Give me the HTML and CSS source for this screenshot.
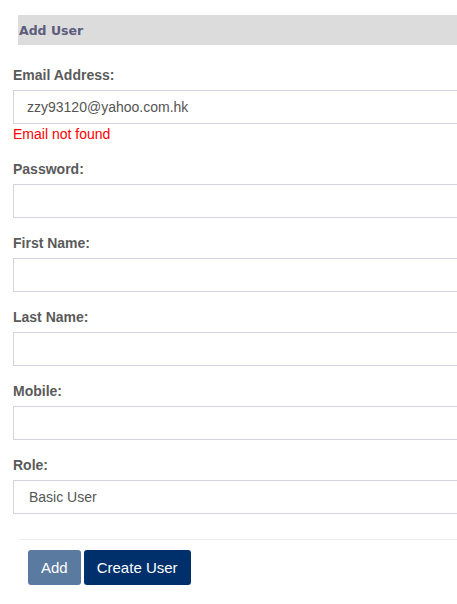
FILE: index.html
```html
<!DOCTYPE html>
<html>
<head>
<meta charset="utf-8">
<link rel="stylesheet" href="styles.css">
</head>
<body>
<div class="page">
  <div class="panel-title">Add User</div>
  <form class="form">
    <div class="field">
      <label class="label">Email Address:</label>
      <input class="input" type="text" value="zzy93120@yahoo.com.hk">
      <div class="error">Email not found</div>
    </div>
    <div class="field">
      <label class="label">Password:</label>
      <input class="input" type="password">
    </div>
    <div class="field">
      <label class="label">First Name:</label>
      <input class="input" type="text">
    </div>
    <div class="field">
      <label class="label">Last Name:</label>
      <input class="input" type="text">
    </div>
    <div class="field">
      <label class="label">Mobile:</label>
      <input class="input" type="text">
    </div>
    <div class="field">
      <label class="label">Role:</label>
      <select class="input select">
        <option>Basic User</option>
      </select>
    </div>
    <div class="actions">
      <button type="button" class="btn btn-light">Add</button>
      <button type="button" class="btn btn-dark">Create User</button>
    </div>
  </form>
</div>
</body>
</html>
```

FILE: styles.css
```css
html, body {
  margin: 0;
  padding: 0;
  background: #ffffff;
  overflow: hidden;
}

.page {
  width: 457px;
  overflow: hidden;
  padding: 15px 0 0 13px;
  box-sizing: border-box;
  font-family: "Liberation Sans", Arial, sans-serif;
}

.panel-title {
  margin-left: 5px;
  height: 30px;
  box-sizing: border-box;
  padding: 2px 0 0 1px;
  line-height: 28px;
  background: #dcdcdc;
  color: #5c5c7c;
  font-family: "DejaVu Sans", Verdana, sans-serif;
  font-weight: bold;
  font-size: 12.5px;
}

.form {
  margin: 20px 0 0 0;
  display: flex;
  flex-direction: column;
  gap: 15px;
}

.field {
  display: flex;
  flex-direction: column;
}

.label {
  font-size: 14px;
  line-height: 20px;
  font-weight: bold;
  color: #5a5a5a;
  margin-bottom: 5px;
}

.input {
  width: 520px;
  height: 34px;
  box-sizing: border-box;
  border: 1px solid #d3d3df;
  border-radius: 0;
  padding: 0 13px;
  margin: 0;
  font-family: "Liberation Sans", Arial, sans-serif;
  font-size: 14px;
  color: #555555;
  background: #ffffff;
  outline: none;
}

.select {
  appearance: none;
  -webkit-appearance: none;
  padding-left: 15px;
}

.error {
  font-size: 14px;
  line-height: 20px;
  color: #ff0000;
}

.actions {
  margin: 10px 0 0 5px;
  border-top: 1px solid #eeeeee;
  padding: 10px 0 0 10px;
  display: flex;
  gap: 3px;
}

.btn {
  height: 35px;
  padding: 0 13px;
  border: none;
  border-radius: 3px;
  color: #ffffff;
  font-family: "Liberation Sans", Arial, sans-serif;
  font-size: 15px;
  cursor: pointer;
}

.btn-light {
  background: #5b7aa0;
}

.btn-dark {
  background: #00306b;
}
```
